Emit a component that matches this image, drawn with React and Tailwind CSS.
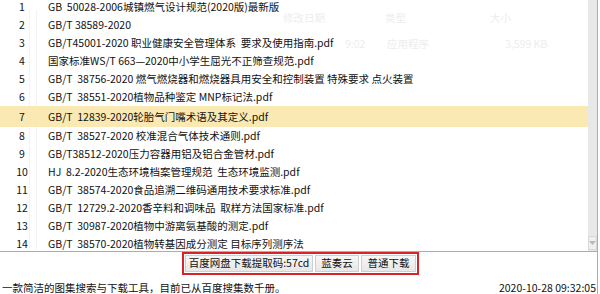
const rows = [
  'GB  50028-2006城镇燃气设计规范(2020版)最新版',
  'GB/T 38589-2020',
  'GB/T45001-2020 职业健康安全管理体系  要求及使用指南.pdf',
  '国家标准WS/T 663—2020中小学生屈光不正筛查规范.pdf',
  'GB/T  38756-2020 燃气燃烧器和燃烧器具用安全和控制装置 特殊要求 点火装置',
  'GB/T  38551-2020植物品种鉴定 MNP标记法.pdf',
  'GB/T  12839-2020轮胎气门嘴术语及其定义.pdf',
  'GB/T  38527-2020 校准混合气体技术通则.pdf',
  'GB/T38512-2020压力容器用铝及铝合金管材.pdf',
  'HJ  8.2-2020生态环境档案管理规范  生态环境监测.pdf',
  'GB/T  38574-2020食品追溯二维码通用技术要求标准.pdf',
  'GB/T  12729.2-2020香辛料和调味品  取样方法国家标准.pdf',
  'GB/T  30987-2020植物中游离氨基酸的测定.pdf',
  'GB/T  38570-2020植物转基因成分测定 目标序列测序法',
]

const SELECTED = 6

function FileRow({ index, name }) {
  const isSelected = index === SELECTED
  return (
    <div
      className={
        isSelected
          ? 'flex h-[21px] items-center bg-[#fbe9b3]'
          : 'flex h-[18px] items-center'
      }
    >
      <span className="w-[44px] shrink-0 text-center">{index + 1}</span>
      <span className="whitespace-pre pl-[4px]">{name}</span>
    </div>
  )
}

function GhostLayer() {
  // faint bits of the window behind, showing through
  return (
    <div className="pointer-events-none absolute inset-0 text-[10.5px] text-[#ededed]">
      <span className="absolute left-[283px] top-[10px]">修改日期</span>
      <span className="absolute left-[385px] top-[10px]">类型</span>
      <span className="absolute left-[490px] top-[10px]">大小</span>
      <span className="absolute left-[345px] top-[36px]">9:02</span>
      <span className="absolute left-[387px] top-[36px]">应用程序</span>
      <span className="absolute left-[505px] top-[36px]">3,599 KB</span>
      <div className="absolute left-[29px] top-[10px] h-[240px] w-[8px] border-x border-[#f3f3f3]" />
    </div>
  )
}

export default function App() {
  return (
    <div
      className="relative h-[294px] w-[600px] overflow-hidden bg-white text-[10.5px] text-[#111111]"
      style={{ fontFamily: '"Noto Sans CJK SC", "Noto Sans", sans-serif' }}
    >
      <div className="flex h-[294px] w-[598px] flex-col border-r border-[#84b5e3]">
        <div className="flex h-[252px] border-b border-[#84b5e3]">
          <div className="relative flex-1 overflow-hidden">
            <GhostLayer />
            <div className="relative -mt-[2px]">
              {rows.map((name, index) => (
                <FileRow key={index} index={index} name={name} />
              ))}
            </div>
          </div>
          <div className="flex w-[9px] flex-col justify-end bg-[#e8e8e8]">
            <div className="mb-[1px] flex h-[14px] items-center justify-center border border-[#d8d8d8] bg-[#efefef]">
              <svg width="7" height="4" viewBox="0 0 7 4">
                <path d="M0 0h7L3.5 4z" fill="#b9b9b9" />
              </svg>
            </div>
          </div>
        </div>

        <div className="flex justify-center pl-[4px]">
          <div className="flex gap-[2px] border-2 border-[#d7242b] p-[1px]">
            <button
              type="button"
              className="h-[17px] w-[128px] border border-[#cfcfcf] bg-gradient-to-b from-[#f7f7f7] to-[#e7e7e7] text-[10.5px] leading-none text-[#111111]"
            >
              百度网盘下载提取码:57cd
            </button>
            <button
              type="button"
              className="h-[17px] w-[44px] border border-[#cfcfcf] bg-gradient-to-b from-[#f7f7f7] to-[#e7e7e7] text-[10.5px] leading-none text-[#111111]"
            >
              蓝奏云
            </button>
            <button
              type="button"
              className="h-[17px] w-[55px] border border-[#cfcfcf] bg-gradient-to-b from-[#f7f7f7] to-[#e7e7e7] text-[10.5px] leading-none text-[#111111]"
            >
              普通下载
            </button>
          </div>
        </div>

        <div className="mt-auto flex items-center justify-between pl-[2px] text-[10.5px] leading-[12px]">
          <span>一款简洁的图集搜索与下载工具，目前已从百度搜集数千册。</span>
          <span className="pr-[1px]">2020-10-28 09:32:05</span>
        </div>
      </div>
    </div>
  )
}
